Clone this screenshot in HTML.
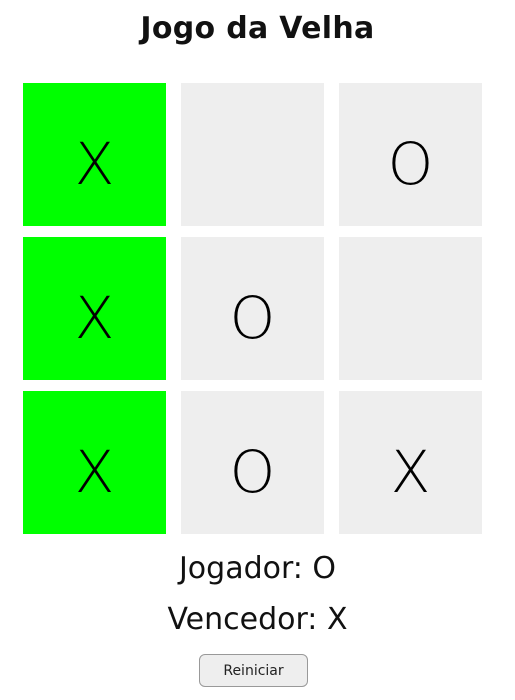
<!DOCTYPE html>
<html><head><meta charset="utf-8"><style>
body{margin:0;width:515px;height:700px;background:#fff;font-family:"DejaVu Sans","Liberation Sans",sans-serif;position:relative;overflow:hidden}
h1{position:absolute;top:11px;left:0;width:515px;text-align:center;margin:0;font-size:30px;font-weight:bold;color:#111;letter-spacing:0.3px}
.c{position:absolute;width:143px;height:143px;background:#eee;display:flex;align-items:center;justify-content:center;font-size:58px;font-weight:300;color:#000;font-family:"DejaVu Sans",sans-serif;box-sizing:border-box;padding-top:18px}
.g{background:#00ff00}
.t{position:absolute;left:0;width:515px;text-align:center;font-size:30px;color:#111}
button{position:absolute;left:199px;top:654px;width:109px;height:33px;border:1px solid #999;border-radius:6px;background:#eee;font-size:14px;color:#222;font-family:"DejaVu Sans",sans-serif}
</style></head><body>
<h1>Jogo da Velha</h1>
<div class="c g" style="left:23px;top:83px">X</div>
<div class="c" style="left:181px;top:83px"></div>
<div class="c" style="left:339px;top:83px">O</div>
<div class="c g" style="left:23px;top:237px">X</div>
<div class="c" style="left:181px;top:237px">O</div>
<div class="c" style="left:339px;top:237px"></div>
<div class="c g" style="left:23px;top:391px">X</div>
<div class="c" style="left:181px;top:391px">O</div>
<div class="c" style="left:339px;top:391px">X</div>
<div class="t" style="top:551px">Jogador: O</div>
<div class="t" style="top:602px">Vencedor: X</div>
<button>Reiniciar</button>
</body></html>
